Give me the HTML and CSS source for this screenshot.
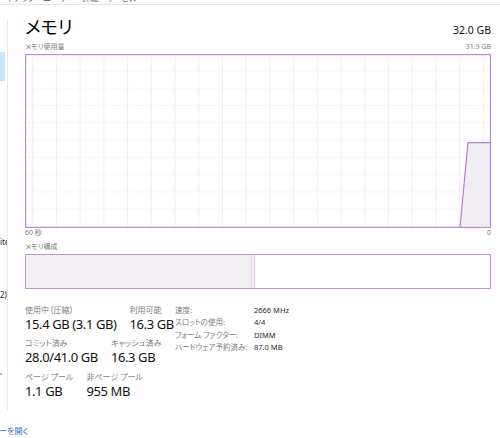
FILE: index.html
```html
<!DOCTYPE html>
<html lang="ja">
<head>
<meta charset="utf-8">
<title>メモリ</title>
<link rel="stylesheet" href="styles.css">
</head>
<body>
<div class="topbar">
  <div class="tabs">
    <span>ートアップ</span><span>ユーザー</span><span>詳細</span><span>サービス</span>
  </div>
</div>
<div class="layout">
  <aside class="sidebar">
    <div class="side-inner">
      <div class="side-selected"></div>
      <div class="side-text t1">ite</div>
      <div class="side-text t2">2)</div>
      <div class="side-text t3">'</div>
    </div>
  </aside>
  <main class="main">
    <div class="title-row">
      <h1 class="title">メモリ</h1>
      <span class="total">32.0 GB</span>
    </div>
    <div class="small-row top-label">
      <span>メモリ使用量</span>
      <span>31.9 GB</span>
    </div>
    <svg class="graph" width="466" height="174" viewBox="0 0 466 174">
      <defs>
        <pattern id="grid" patternUnits="userSpaceOnUse" x="7.2" y="0" width="23.72" height="17.3">
          <path d="M0.5 0V17.3" stroke="#f4ecf6" stroke-width="1" fill="none"/>
          <path d="M0 17.3H23.72" stroke="#f1ecf2" stroke-width="1" fill="none"/>
        </pattern>
      </defs>
      <rect x="0" y="0" width="466" height="174" fill="#fff"/>
      <rect x="1" y="1" width="464" height="172" fill="url(#grid)"/>
      <polygon points="435,173 443,88.7 466,88.7 466,174 435,174" fill="#f1eef3"/>
      <polyline points="435,173 443,88.7 466,88.7" fill="none" stroke="#b67ed2" stroke-width="1.2"/>
      <rect x="0.6" y="0.6" width="464.8" height="172.8" fill="none" stroke="#c08ad8" stroke-width="1.2"/>
    </svg>
    <div class="small-row axis">
      <span>60 秒</span>
      <span>0</span>
    </div>
    <div class="small-row comp-label">
      <span>メモリ構成</span>
    </div>
    <div class="comp-bar">
      <div class="seg-inuse"></div>
      <div class="seg-modified"></div>
      <div class="seg-rest"></div>
    </div>
    <div class="stats">
      <div class="stats-left">
        <div class="stat-row r1">
          <div class="stat"><div class="stat-label">使用中 (圧縮)</div><div class="stat-value">15.4 GB (3.1 GB)</div></div>
          <div class="stat"><div class="stat-label">利用可能</div><div class="stat-value">16.3 GB</div></div>
        </div>
        <div class="stat-row r2">
          <div class="stat"><div class="stat-label">コミット済み</div><div class="stat-value">28.0/41.0 GB</div></div>
          <div class="stat"><div class="stat-label">キャッシュ済み</div><div class="stat-value">16.3 GB</div></div>
        </div>
        <div class="stat-row r3">
          <div class="stat"><div class="stat-label">ページ プール</div><div class="stat-value">1.1 GB</div></div>
          <div class="stat"><div class="stat-label">非ページ プール</div><div class="stat-value">955 MB</div></div>
        </div>
      </div>
      <dl class="stats-right">
        <dt>速度:</dt><dd>2666 MHz</dd>
        <dt>スロットの使用:</dt><dd>4/4</dd>
        <dt>フォーム ファクター:</dt><dd>DIMM</dd>
        <dt>ハードウェア予約済み:</dt><dd>87.0 MB</dd>
      </dl>
    </div>
  </main>
</div>
<div class="footer">
  <a class="footer-link" href="#">リソース モニターを開く</a>
</div>
</body>
</html>
```
FILE: styles.css
```css
* { box-sizing: border-box; }
html, body {
  margin: 0;
  padding: 0;
  background: #fff;
}
body {
  width: 500px;
  height: 438px;
  overflow: hidden;
  font-family: "Noto Sans", "Noto Sans CJK JP", sans-serif;
  font-feature-settings: "palt";
  color: #000;
}

.topbar {
  height: 5px;
  border-bottom: 1px solid #e4e4e4;
  overflow: hidden;
}
.tabs {
  display: flex;
  gap: 8px;
  margin-top: -7px;
  font-size: 8px;
  line-height: 10px;
  color: #555;
  white-space: nowrap;
}

.layout {
  display: flex;
  height: 418px;
}
.sidebar {
  width: 8px;
  flex: none;
  padding-top: 15px;
}
.side-inner {
  height: 390px;
  border-right: 1px solid #e8e8e8;
  overflow: hidden;
}
.side-selected {
  margin-top: 32px;
  width: 5px;
  height: 29px;
  background: #cce4f7;
}
.side-text {
  font-size: 8px;
  line-height: 10px;
  color: #222;
  white-space: nowrap;
}
.t1 { margin-top: 156px; }
.t2 { margin-top: 43px; }
.t3 { margin-top: 72px; }

.main {
  flex: 1;
  padding: 11px 9px 0 17px;
}
.title-row {
  display: flex;
  justify-content: space-between;
  align-items: baseline;
  height: 22px;
}
.title {
  margin: 0;
  font-size: 18px;
  font-weight: 400;
  line-height: 22px;
}
.total {
  font-size: 10.5px;
  line-height: 14px;
  color: #111;
}
.small-row {
  display: flex;
  justify-content: space-between;
  font-size: 7px;
  line-height: 10px;
  color: #7a7a7a;
}
.top-label { margin-top: 4px; }
.graph {
  display: block;
  margin-top: 2px;
}
.comp-label { margin-top: 4px; }
.comp-bar {
  margin-top: 2px;
  height: 35px;
  border: 1.2px solid #c58fdb;
  display: flex;
}
.seg-inuse {
  width: 226px;
  background: #f1eff1;
  border-right: 1px solid #e3d3ea;
}
.seg-modified {
  width: 3px;
  background: #f5f1f6;
  border-right: 1px solid #dcc4e6;
}
.seg-rest {
  flex: 1;
  background: #fff;
}

.stats {
  display: flex;
  margin-top: 15px;
}
.stats-left {
  width: 150px;
  flex: none;
}
.stat-row {
  display: flex;
  gap: 13px;
}
.r2 { margin-top: 4px; }
.r3 { margin-top: 5px; }
.stat-label {
  font-size: 8px;
  line-height: 12px;
  color: #7d7d7d;
  white-space: nowrap;
}
.stat-value {
  font-size: 13px;
  line-height: 17px;
  color: #111;
  white-space: nowrap;
  letter-spacing: -0.4px;
}
.stats-right {
  margin: 0;
  display: grid;
  grid-template-columns: 79px auto;
  grid-auto-rows: 12.3px;
  align-content: start;
  font-size: 7.5px;
  line-height: 12.3px;
  white-space: nowrap;
}
.stats-right dt {
  color: #7d7d7d;
}
.stats-right dd {
  margin: 0;
  color: #2a2a2a;
}

.footer {
  width: 28px;
  height: 15px;
  overflow: hidden;
  display: flex;
  justify-content: flex-end;
  padding-top: 2px;
}
.footer-link {
  font-size: 8px;
  line-height: 12px;
  color: #2b74c9;
  text-decoration: none;
  white-space: nowrap;
  flex: none;
}
```
